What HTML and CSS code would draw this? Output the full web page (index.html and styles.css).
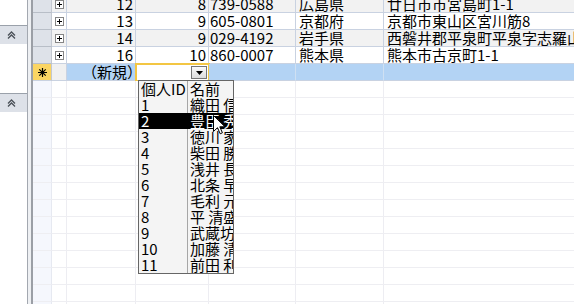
FILE: index.html
```html
<!DOCTYPE html>
<html lang="ja">
<head>
<meta charset="utf-8">
<title>住所テーブル</title>
<link rel="stylesheet" href="styles.css">
</head>
<body>
<div class="app">
  <aside class="nav">
    <div class="nav-bar first"><svg width="9" height="8" viewBox="0 0 9 8"><path d="M1 4.5L4.5 1L8 4.5M1 7.5L4.5 4L8 7.5" fill="none" stroke="#4a5058" stroke-width="1.3"/></svg></div>
    <div class="nav-bar second"><svg width="9" height="8" viewBox="0 0 9 8"><path d="M1 4.5L4.5 1L8 4.5M1 7.5L4.5 4L8 7.5" fill="none" stroke="#4a5058" stroke-width="1.3"/></svg></div>
  </aside>
  <div class="splitter"></div>
  <main class="sheet">
    <div class="row data alt">
      <div class="c sel"></div>
      <div class="c exp"><svg width="9" height="9" viewBox="0 0 9 9"><rect x="0.5" y="0.5" width="8" height="8" fill="#fff" stroke="#858585"/><path d="M2 4.5H7M4.5 2V7" stroke="#000"/></svg></div>
      <div class="c num">12</div>
      <div class="c num">8</div>
      <div class="c txt">739-0588</div>
      <div class="c txt jp">広島県</div>
      <div class="c txt jp last">廿日市市宮島町1-1</div>
    </div>
    <div class="row data">
      <div class="c sel"></div>
      <div class="c exp"><svg width="9" height="9" viewBox="0 0 9 9"><rect x="0.5" y="0.5" width="8" height="8" fill="#fff" stroke="#858585"/><path d="M2 4.5H7M4.5 2V7" stroke="#000"/></svg></div>
      <div class="c num">13</div>
      <div class="c num">9</div>
      <div class="c txt">605-0801</div>
      <div class="c txt jp">京都府</div>
      <div class="c txt jp last">京都市東山区宮川筋8</div>
    </div>
    <div class="row data alt">
      <div class="c sel"></div>
      <div class="c exp"><svg width="9" height="9" viewBox="0 0 9 9"><rect x="0.5" y="0.5" width="8" height="8" fill="#fff" stroke="#858585"/><path d="M2 4.5H7M4.5 2V7" stroke="#000"/></svg></div>
      <div class="c num">14</div>
      <div class="c num">9</div>
      <div class="c txt">029-4192</div>
      <div class="c txt jp">岩手県</div>
      <div class="c txt jp last">西磐井郡平泉町平泉字志羅山</div>
    </div>
    <div class="row data">
      <div class="c sel"></div>
      <div class="c exp"><svg width="9" height="9" viewBox="0 0 9 9"><rect x="0.5" y="0.5" width="8" height="8" fill="#fff" stroke="#858585"/><path d="M2 4.5H7M4.5 2V7" stroke="#000"/></svg></div>
      <div class="c num">16</div>
      <div class="c num">10</div>
      <div class="c txt">860-0007</div>
      <div class="c txt jp">熊本県</div>
      <div class="c txt jp last">熊本市古京町1-1</div>
    </div>
    <div class="row newrow">
      <div class="c sel"><svg width="9" height="9" viewBox="0 0 9 9"><path d="M4.5 0V9M0 4.5H9M1.3 1.3L7.7 7.7M7.7 1.3L1.3 7.7" stroke="#000" stroke-width="1.2"/></svg></div>
      <div class="c exp"></div>
      <div class="c num"><span class="newlabel">（新規）</span></div>
      <div class="c focus"><span class="ddbtn"><svg width="7" height="4" viewBox="0 0 7 4"><path d="M0 0H7L3.5 4Z" fill="#000"/></svg></span></div>
      <div class="c"></div>
      <div class="c"></div>
      <div class="c last"></div>
    </div>
    <div class="row blank"><div class="c sel"></div><div class="c"></div><div class="c"></div><div class="c"></div><div class="c"></div><div class="c"></div><div class="c last"></div></div>
    <div class="row blank"><div class="c sel"></div><div class="c"></div><div class="c"></div><div class="c"></div><div class="c"></div><div class="c"></div><div class="c last"></div></div>
    <div class="row blank"><div class="c sel"></div><div class="c"></div><div class="c"></div><div class="c"></div><div class="c"></div><div class="c"></div><div class="c last"></div></div>
    <div class="row blank"><div class="c sel"></div><div class="c"></div><div class="c"></div><div class="c"></div><div class="c"></div><div class="c"></div><div class="c last"></div></div>
    <div class="row blank"><div class="c sel"></div><div class="c"></div><div class="c"></div><div class="c"></div><div class="c"></div><div class="c"></div><div class="c last"></div></div>
    <div class="row blank"><div class="c sel"></div><div class="c"></div><div class="c"></div><div class="c"></div><div class="c"></div><div class="c"></div><div class="c last"></div></div>
    <div class="row blank"><div class="c sel"></div><div class="c"></div><div class="c"></div><div class="c"></div><div class="c"></div><div class="c"></div><div class="c last"></div></div>
    <div class="row blank"><div class="c sel"></div><div class="c"></div><div class="c"></div><div class="c"></div><div class="c"></div><div class="c"></div><div class="c last"></div></div>
    <div class="row blank"><div class="c sel"></div><div class="c"></div><div class="c"></div><div class="c"></div><div class="c"></div><div class="c"></div><div class="c last"></div></div>
    <div class="row blank"><div class="c sel"></div><div class="c"></div><div class="c"></div><div class="c"></div><div class="c"></div><div class="c"></div><div class="c last"></div></div>
    <div class="row blank"><div class="c sel"></div><div class="c"></div><div class="c"></div><div class="c"></div><div class="c"></div><div class="c"></div><div class="c last"></div></div>
    <div class="row blank"><div class="c sel"></div><div class="c"></div><div class="c"></div><div class="c"></div><div class="c"></div><div class="c"></div><div class="c last"></div></div>
    <div class="row blank"><div class="c sel"></div><div class="c"></div><div class="c"></div><div class="c"></div><div class="c"></div><div class="c"></div><div class="c last"></div></div>
    <div class="row blank"><div class="c sel"></div><div class="c"></div><div class="c"></div><div class="c"></div><div class="c"></div><div class="c"></div><div class="c last"></div></div>
  </main>
</div>

<div class="dropdown">
  <div class="dd-row dd-head"><span>個人ID</span><span>名前</span></div>
  <div class="dd-row"><span>1</span><span>織田 信長</span></div>
  <div class="dd-row on"><span>2</span><span>豊臣 秀吉</span></div>
  <div class="dd-row"><span>3</span><span>徳川 家康</span></div>
  <div class="dd-row"><span>4</span><span>柴田 勝家</span></div>
  <div class="dd-row"><span>5</span><span>浅井 長政</span></div>
  <div class="dd-row"><span>6</span><span>北条 早雲</span></div>
  <div class="dd-row"><span>7</span><span>毛利 元就</span></div>
  <div class="dd-row"><span>8</span><span>平 清盛</span></div>
  <div class="dd-row"><span>9</span><span>武蔵坊 弁慶</span></div>
  <div class="dd-row"><span>10</span><span>加藤 清正</span></div>
  <div class="dd-row"><span>11</span><span>前田 利家</span></div>
</div>

<svg class="cursor" width="13" height="20" viewBox="0 0 13 20"><path d="M0.5 0.5V16.5L4.5 12.7L7.2 18.8L9.4 17.8L6.8 11.8H12Z" fill="#fff" stroke="#000" stroke-width="1" stroke-linejoin="miter"/></svg>
</body>
</html>
```
FILE: styles.css
```css
html, body {
  margin: 0;
  padding: 0;
}

body {
  width: 574px;
  height: 304px;
  overflow: hidden;
  position: relative;
  background: #ffffff;
  color: #000000;
  font-family: "Noto Sans CJK JP", "Noto Sans", sans-serif;
  font-size: 15px;
}

.app {
  display: flex;
  height: 304px;
}

/* left navigation pane */
.nav {
  flex: none;
  width: 28px;
  box-sizing: border-box;
  border-right: 1px solid #a3a8b0;
  background: #ffffff;
  display: flex;
  flex-direction: column;
}

.nav-bar {
  height: 18px;
  border-top: 1px solid #9aa1aa;
  background: #dde1e8;
  display: flex;
  align-items: center;
  padding-left: 7px;
}

.nav-bar.first {
  margin-top: 25px;
}

.nav-bar.second {
  margin-top: 49px;
}

.splitter {
  flex: none;
  width: 5px;
  background: linear-gradient(to right, #eef0f3 0 3px, #9b9fa6 3px 5px);
}

/* datasheet */
.sheet {
  flex: 1;
  min-width: 0;
  overflow: hidden;
  display: flex;
  flex-direction: column;
}

.row {
  flex: none;
  display: grid;
  grid-template-columns: 19px 15px 69px 73px 87px 88px 1fr;
  height: 17px;
}

.row.data:first-child {
  margin-top: -4px;
}

.c {
  box-sizing: border-box;
  height: 17px;
  border-right: 1px solid #c9d2e1;
  border-bottom: 1px solid #c9d2e1;
  line-height: 16px;
  white-space: nowrap;
  overflow: hidden;
}

.c.last {
  border-right: none;
}

.data .c {
  background: #ffffff;
}

.data.alt .c {
  background: #f2f2f2;
}

.data .c.sel {
  background: #dee2e9;
  border-right-color: #c3c8d0;
  border-bottom-color: #b8bec7;
}

.exp {
  display: flex;
  align-items: center;
  justify-content: center;
}

.num {
  text-align: right;
  padding-right: 2px;
}

.txt {
  padding-left: 1px;
}

.txt.jp {
  padding-left: 3px;
}

/* new record row */
.newrow .c {
  background: #b3d3f4;
  border-right-color: #cfe0f2;
  border-bottom-color: #c9d2e1;
}

.newrow .c.sel {
  background: #fbd563;
  border-right-color: #c3c8d0;
  display: flex;
  align-items: center;
  justify-content: center;
}

.newrow .c.exp {
  background: #f0f0f0;
  border-right-color: #c9d2e1;
}

.newrow .c.num {
  overflow: visible;
  padding-right: 0;
}

.newlabel {
  display: inline-block;
  margin-right: -7px;
}

.newrow .c.focus {
  background: #ffffff;
  outline: 2px solid #f3c643;
  outline-offset: -1px;
  display: flex;
  align-items: center;
  justify-content: flex-end;
  padding-right: 1px;
  overflow: visible;
}

.ddbtn {
  box-sizing: border-box;
  width: 16px;
  height: 13px;
  border: 1px solid #767676;
  background: linear-gradient(#fafafa, #dcdcdc);
  display: flex;
  align-items: center;
  justify-content: center;
  padding-top: 2px;
}

/* empty rows below */
.blank .c {
  background: #ffffff;
  border-right-color: #ededf2;
  border-bottom-color: #eeeef2;
}

.blank .c.sel {
  background: #f5f7fd;
  border-right-color: #e6e9f1;
}

/* combo drop-down list */
.dropdown {
  position: absolute;
  left: 138px;
  top: 80px;
  width: 96px;
  height: 194px;
  box-sizing: border-box;
  border: 1px solid #666666;
  background: #f4f4f4;
  z-index: 2;
  overflow: hidden;
}

.dd-row {
  display: grid;
  grid-template-columns: 49px 1fr;
  height: 16px;
  line-height: 16px;
}

.dd-row span {
  box-sizing: border-box;
  white-space: nowrap;
  overflow: hidden;
  padding-left: 2px;
}

.dd-row span:first-child {
  border-right: 1px solid #a6a6a6;
}

.dd-row.on {
  background: #000000;
  color: #ffffff;
}

.dd-row.on span:first-child {
  border-right-color: #000000;
}

.cursor {
  position: absolute;
  left: 213px;
  top: 115px;
  z-index: 3;
}
```
